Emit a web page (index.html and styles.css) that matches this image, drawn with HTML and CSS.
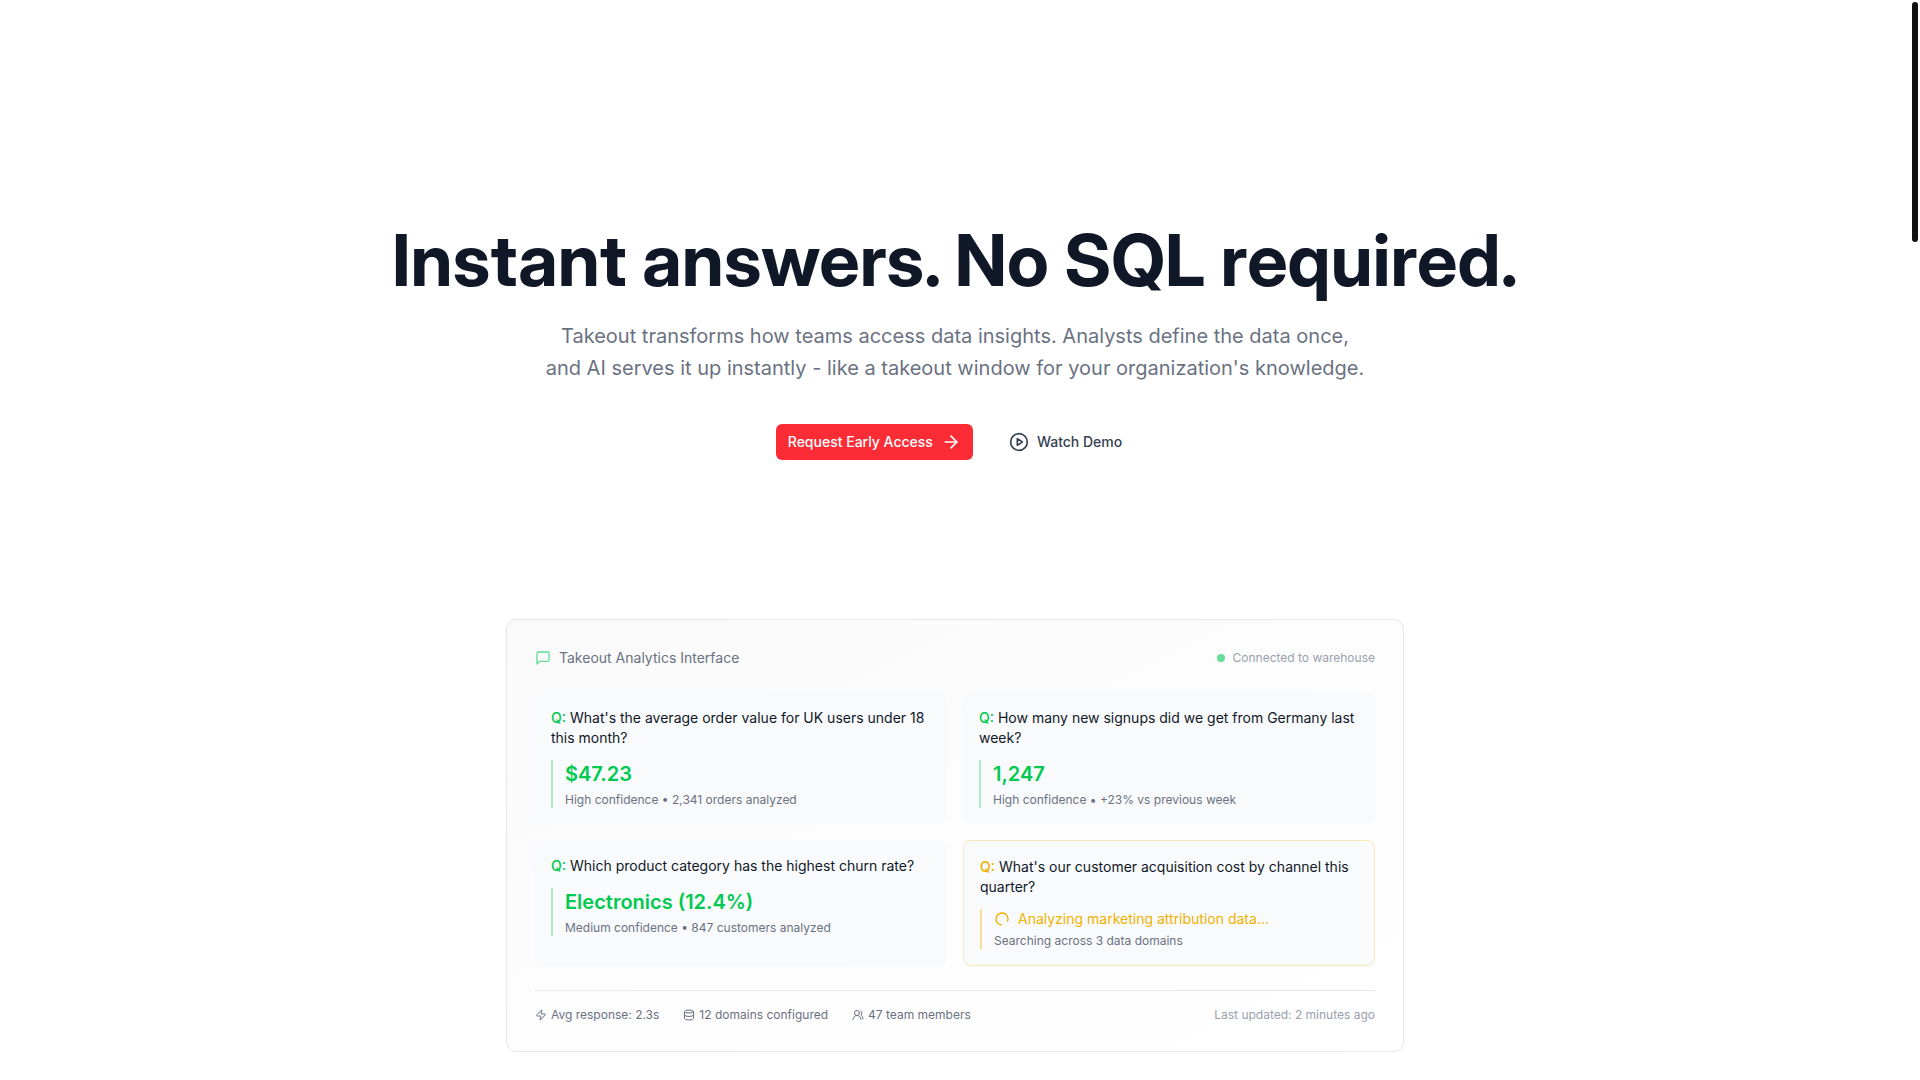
FILE: index.html
```html
<!DOCTYPE html>
<html lang="en">
<head>
  <meta charset="UTF-8">
  <meta name="viewport" content="width=device-width, initial-scale=1.0">
  <title>Takeout - Instant answers. No SQL required.</title>
  <link rel="stylesheet" href="styles.css">
</head>
<body>
  <main class="page">
    <section class="hero">
      <h1>Instant answers. No SQL required.</h1>
      <p class="lead">
        Takeout transforms how teams access data insights. Analysts define the data once,<br>
        and AI serves it up instantly - like a takeout window for your organization's knowledge.
      </p>
      <div class="actions">
        <button type="button" class="btn btn-primary">
          Request Early Access
          <svg class="icon icon-lg" viewBox="0 0 24 24"><path d="M5 12h14"/><path d="m12 5 7 7-7 7"/></svg>
        </button>
        <button type="button" class="btn btn-ghost">
          <svg class="icon icon-lg" viewBox="0 0 24 24"><circle cx="12" cy="12" r="10"/><path d="m10 8 6 4-6 4z"/></svg>
          Watch Demo
        </button>
      </div>
    </section>

    <section class="panel">
      <header class="panel-header">
        <h2 class="panel-title">
          <svg class="icon icon-md" viewBox="0 0 24 24"><path d="M21 15a2 2 0 0 1-2 2H7l-4 4V5a2 2 0 0 1 2-2h14a2 2 0 0 1 2 2z"/></svg>
          Takeout Analytics Interface
        </h2>
        <div class="status"><span class="dot"></span>Connected to warehouse</div>
      </header>

      <div class="cards">
        <article class="card">
          <p class="question"><span class="q">Q:</span> What's the average order value for UK users under 18 this month?</p>
          <div class="answer">
            <p class="value">$47.23</p>
            <p class="meta">High confidence • 2,341 orders analyzed</p>
          </div>
        </article>
        <article class="card">
          <p class="question"><span class="q">Q:</span> How many new signups did we get from Germany last week?</p>
          <div class="answer">
            <p class="value">1,247</p>
            <p class="meta">High confidence • +23% vs previous week</p>
          </div>
        </article>
        <article class="card">
          <p class="question"><span class="q">Q:</span> Which product category has the highest churn rate?</p>
          <div class="answer">
            <p class="value">Electronics (12.4%)</p>
            <p class="meta">Medium confidence • 847 customers analyzed</p>
          </div>
        </article>
        <article class="card card-pending">
          <p class="question"><span class="q">Q:</span> What's our customer acquisition cost by channel this quarter?</p>
          <div class="answer">
            <p class="loading">
              <svg class="icon icon-md spinner" viewBox="0 0 24 24"><path d="M21 12a9 9 0 1 1-6.219-8.56"/></svg>
              Analyzing marketing attribution data...
            </p>
            <p class="meta">Searching across 3 data domains</p>
          </div>
        </article>
      </div>

      <footer class="panel-footer">
        <ul class="stats">
          <li>
            <svg class="icon icon-sm" viewBox="0 0 24 24"><path d="M4 14a1 1 0 0 1-.78-1.63l9.9-10.2a.5.5 0 0 1 .86.46l-1.92 6.02A1 1 0 0 0 13 10h7a1 1 0 0 1 .78 1.63l-9.9 10.2a.5.5 0 0 1-.86-.46l1.92-6.02A1 1 0 0 0 11 14z"/></svg>
            Avg response: 2.3s
          </li>
          <li>
            <svg class="icon icon-sm" viewBox="0 0 24 24"><ellipse cx="12" cy="5" rx="9" ry="3"/><path d="M3 5v14a9 3 0 0 0 18 0V5"/><path d="M3 12a9 3 0 0 0 18 0"/></svg>
            12 domains configured
          </li>
          <li>
            <svg class="icon icon-sm" viewBox="0 0 24 24"><path d="M18 21a8 8 0 0 0-16 0"/><circle cx="10" cy="8" r="5"/><path d="M22 20c0-3.37-2-6.5-4-8a5 5 0 0 0-.45-8.3"/></svg>
            47 team members
          </li>
        </ul>
        <span class="updated">Last updated: 2 minutes ago</span>
      </footer>
    </section>
  </main>
  <div class="scroll-thumb"></div>
</body>
</html>
```

FILE: styles.css
```css
* {
  box-sizing: border-box;
  margin: 0;
  padding: 0;
}

body {
  background-color: #fff;
  color: #101828;
  font-family: Inter, "Liberation Sans", sans-serif;
  font-size: 14px;
  line-height: 20px;
  padding-right: 10px;
}

.page {
  display: flex;
  flex-direction: column;
  align-items: center;
  padding: 224px 24px 28px;
}

.hero {
  text-align: center;
  margin-bottom: 159px;
}

/* display cut of Inter */
h1 {
  font-family: "Inter Display", Inter, "Liberation Sans", sans-serif;
  font-variation-settings: "opsz" 32;
  font-size: 72px;
  line-height: 72px;
  font-weight: 700;
  margin-bottom: 24px;
}

.lead {
  font-size: 20px;
  line-height: 32px;
  color: #6a7282;
  margin-bottom: 40px;
}

.actions {
  display: flex;
  justify-content: center;
  gap: 24px;
}

.btn {
  display: flex;
  align-items: center;
  gap: 8px;
  padding: 8px 12px;
  border: none;
  border-radius: 6px;
  background: none;
  font: inherit;
  font-weight: 500;
  cursor: pointer;
}

.btn-primary {
  background-color: #fb2c36;
  color: #fff;
}

.btn-ghost {
  color: #364153;
}

.icon {
  flex: none;
  fill: none;
  stroke: currentColor;
  stroke-width: 2;
  stroke-linecap: round;
  stroke-linejoin: round;
}

.icon-lg {
  width: 20px;
  height: 20px;
}

.icon-md {
  width: 16px;
  height: 16px;
}

.icon-sm {
  width: 12px;
  height: 12px;
}

.panel {
  width: 100%;
  max-width: 898px;
  padding: 28px;
  border: 1px solid #e5e7eb;
  border-radius: 10px;
  background: linear-gradient(to bottom right, #fafafb, #fff);
}

.panel-header {
  display: flex;
  justify-content: space-between;
  align-items: center;
  margin-bottom: 24px;
}

.panel-title {
  display: flex;
  align-items: center;
  gap: 8px;
  font-size: 14px;
  font-weight: 400;
  color: #6a7282;
}

.panel-title .icon {
  color: #00c951;
  opacity: 0.6;
}

.status {
  display: flex;
  align-items: center;
  gap: 8px;
  font-size: 12px;
  line-height: 16px;
  color: #99a1af;
}

.dot {
  width: 8px;
  height: 8px;
  border-radius: 50%;
  background-color: #00c951;
  opacity: 0.6;
}

.cards {
  display: grid;
  grid-template-columns: 1fr 1fr;
  gap: 16px;
}

.card {
  padding: 16px;
  border-radius: 8px;
  background-color: #f9fafc;
}

.question {
  margin-bottom: 12px;
}

.q {
  color: #00c951;
  font-weight: 500;
}

.answer {
  display: flex;
  flex-direction: column;
  gap: 4px;
  padding-left: 12px;
  border-left: 2px solid rgba(0, 201, 81, 0.3);
}

.value {
  font-size: 20px;
  line-height: 28px;
  font-weight: 600;
  color: #00c951;
}

.meta {
  font-size: 12px;
  line-height: 16px;
  color: #6a7282;
}

.card-pending {
  border: 1px solid rgba(240, 177, 0, 0.25);
}

.card-pending .q {
  color: #f0b100;
}

.card-pending .answer {
  border-left-color: rgba(240, 177, 0, 0.4);
}

.loading {
  display: flex;
  align-items: center;
  gap: 8px;
  color: #f0b100;
}

.spinner {
  transform: rotate(95deg);
}

.panel-footer {
  display: flex;
  justify-content: space-between;
  align-items: center;
  margin-top: 24px;
  padding-top: 16px;
  border-top: 1px solid #e5e7eb;
  font-size: 12px;
  line-height: 16px;
  color: #6a7282;
}

.stats {
  display: flex;
  gap: 24px;
  list-style: none;
}

.stats li {
  display: flex;
  align-items: center;
  gap: 4px;
}

.updated {
  color: #99a1af;
}

.scroll-thumb {
  position: fixed;
  top: 2px;
  right: 2px;
  width: 6px;
  height: 240px;
  border-radius: 3px;
  background-color: #111;
}
```
